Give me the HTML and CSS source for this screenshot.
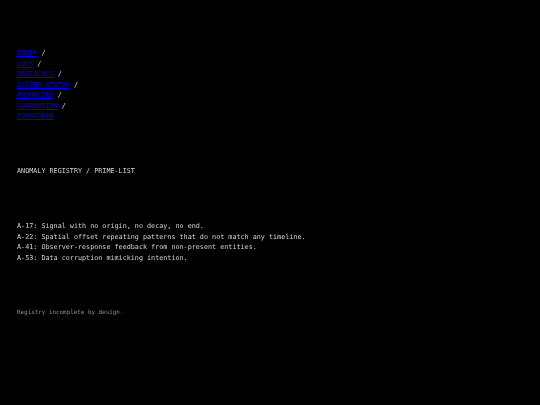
FILE: index.html
```html
<!DOCTYPE html>
<html>
<head>
<meta charset="utf-8">
<link rel="stylesheet" href="styles.css">
</head>
<body>
<main class="page">
  <nav class="nav">
    <div><a href="#">INDEX</a> /</div>
    <div><a href="#">LOGS</a> /</div>
    <div><a href="#">PROTOCOLS</a> /</div>
    <div><a href="#">SYSTEM STATUS</a> /</div>
    <div><a href="#">ANOMALIES</a> /</div>
    <div><a href="#">CORRUPTION</a> /</div>
    <div><a href="#">FORBIDDEN</a></div>
  </nav>
  <h1 class="title">ANOMALY REGISTRY / PRIME-LIST</h1>
  <ul class="list">
    <li>A-17: Signal with no origin, no decay, no end.</li>
    <li>A-22: Spatial offset repeating patterns that do not match any timeline.</li>
    <li>A-41: Observer-response feedback from non-present entities.</li>
    <li>A-53: Data corruption mimicking intention.</li>
  </ul>
  <p class="note">Registry incomplete by design.</p>
</main>
</body>
</html>
```
FILE: styles.css
```css
html, body {
  margin: 0;
  background: #000;
}
body {
  font-family: "DejaVu Sans Mono", "Liberation Mono", monospace;
  font-size: 6.75px;
  line-height: 10.5px;
  color: #d4d4d4;
}
.page {
  padding: 48px 17px 0;
  will-change: transform;
}
.nav a {
  color: #0000ee;
}
.title {
  margin: 44px 0 0;
  font-size: 6.75px;
  font-weight: normal;
  line-height: 10.5px;
}
.list {
  list-style: none;
  margin: 45px 0 0;
  padding: 0;
}
.note {
  margin: 44px 0 0;
  font-size: 5.9px;
  color: #8a8a8a;
}
```
